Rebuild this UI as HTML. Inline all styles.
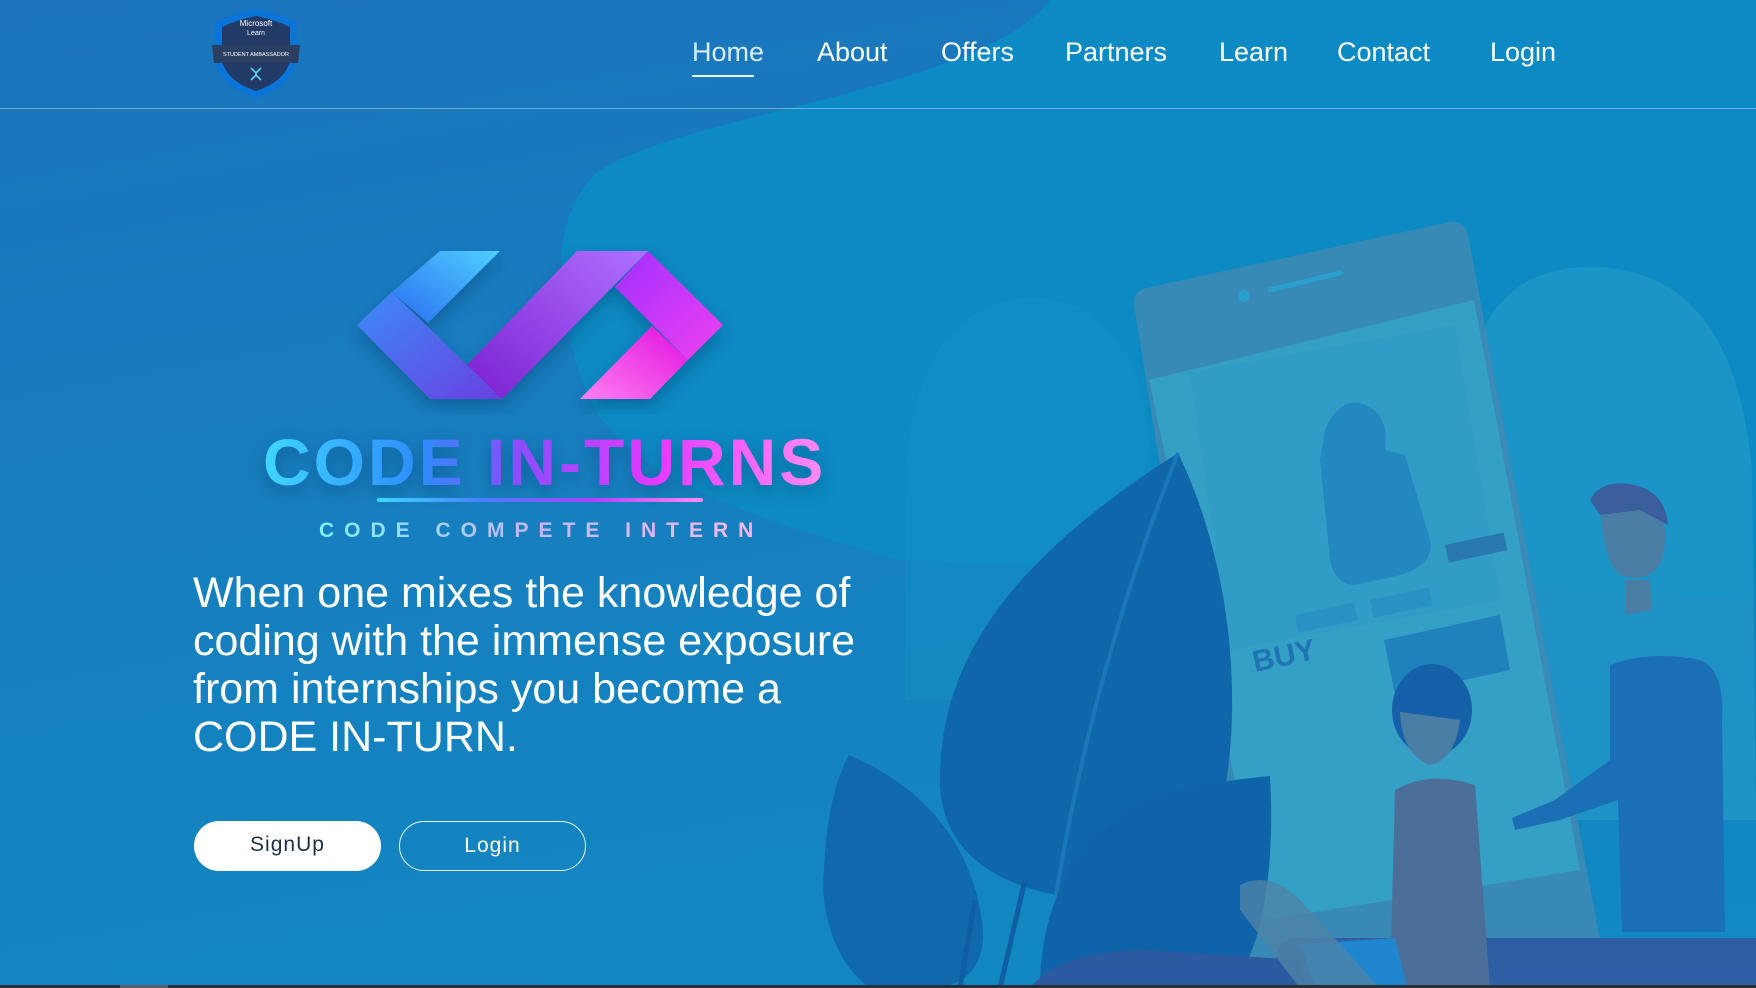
<!DOCTYPE html>
<html><head><meta charset="utf-8">
<style>
*{margin:0;padding:0;box-sizing:border-box}
html,body{width:1756px;height:988px;overflow:hidden}
body{position:relative;font-family:"Liberation Sans",sans-serif;background:linear-gradient(170deg,#1b74bc 0%,#1680bf 50%,#118ac3 100%);color:#fff}
.abs{position:absolute}
.nav a{position:absolute;top:37px;font-size:27px;color:#fff;text-decoration:none;white-space:nowrap}
.hline{position:absolute;left:0;top:108px;width:1756px;height:1px;background:rgba(190,220,245,.5)}
.title{position:absolute;left:263px;top:424px;font-size:66px;font-weight:bold;letter-spacing:3px;white-space:nowrap;background:linear-gradient(90deg,#3fd6ff 0%,#2d8cff 28%,#8a4dff 45%,#e638ff 70%,#ff8cf0 100%);-webkit-background-clip:text;background-clip:text;color:transparent;filter:drop-shadow(0 6px 8px rgba(0,40,90,.35))}
.gline{position:absolute;left:377px;top:498px;width:326px;height:4px;background:linear-gradient(90deg,#3fd6ff,#4a7dff,#b040ff,#ff8cf0);border-radius:2px}
.tag{position:absolute;left:319px;top:519px;font-size:21px;font-weight:bold;letter-spacing:10px;white-space:nowrap;background:linear-gradient(90deg,#7ff0ff,#c7b6ff 50%,#ffb8f2);-webkit-background-clip:text;background-clip:text;color:transparent}
.para{position:absolute;left:193px;top:569px;font-size:43px;line-height:48px;white-space:nowrap}
.btn{position:absolute;top:821px;width:187px;height:50px;border-radius:25px;font-size:21px;letter-spacing:1px;text-align:center;line-height:48px}
</style></head><body>
<svg class="abs" style="left:0;top:0" width="1756" height="988" viewBox="0 0 1756 988">
  <path d="M1050 0 C980 90 700 110 600 170 C540 220 560 330 590 400 C630 480 760 520 900 560 L1756 600 L1756 0 Z" fill="#0c8ac3"/>
  <!-- background domes -->
  <path d="M905 500 C905 360 960 298 1030 298 C1110 298 1150 360 1150 470 L1150 700 L905 700 Z" fill="#1590c6" opacity="0.45"/>
  <path d="M1470 400 C1470 320 1510 267 1590 267 C1690 267 1740 340 1752 470 L1756 820 L1470 820 Z" fill="#2aa0cc" opacity="0.5"/>
  <!-- phone -->
  <path d="M1134 305 Q1133 292 1146 288 L1450 222 Q1465 220 1468 235 L1600 940 L1240 960 Z" fill="#3f8ab4" opacity="0.85"/>
  <path d="M1149 380 L1474 300 L1580 870 L1265 920 Z" fill="#35a0c6"/>
  <path d="M1190 372 L1455 325 L1500 600 L1230 650 Z" fill="#2e9cc4" opacity="0.8"/>
  <path d="M1325 430 Q1340 395 1365 405 Q1390 415 1385 450 L1405 455 L1430 540 Q1435 565 1400 575 L1355 585 Q1335 585 1330 560 L1320 460 Z" fill="#2388c0"/>
  <rect x="1295" y="615" width="60" height="18" fill="#2a92c2" transform="rotate(-12 1295 615)"/>
  <rect x="1370" y="600" width="60" height="18" fill="#2a92c2" transform="rotate(-12 1370 600)"/>
  <rect x="1445" y="545" width="60" height="18" fill="#2a78b0" transform="rotate(-12 1445 545)"/>
  <path d="M1384 640 L1500 615 L1510 670 L1395 695 Z" fill="#1f82bd"/>
  <text x="1255" y="672" font-family="Liberation Sans" font-weight="bold" font-size="30" fill="#1f74b4" transform="rotate(-12 1255 672)">BUY</text>
  <circle cx="1244" cy="296" r="6" fill="#2a9fce"/>
  <path d="M1270 290 L1340 273" stroke="#2a9fce" stroke-width="5" stroke-linecap="round"/>
  <!-- leaves -->
  <path d="M1178 453 C1230 560 1245 700 1221 810 C1190 880 1110 900 1056 895 C980 880 940 840 940 780 C940 660 1010 560 1178 453 Z" fill="#0f66aa"/>
  <path d="M1178 453 C1120 600 1080 750 1056 895" stroke="#1a78b8" stroke-width="4" fill="none"/>
  <path d="M849 755 C930 790 975 850 983 930 C985 970 960 988 930 988 L870 988 C830 960 820 900 824 871 C826 820 835 780 849 755 Z" fill="#1068ad"/>
  <path d="M1270 776 C1275 860 1265 950 1230 988 L1040 988 C1040 900 1080 830 1150 800 C1190 785 1230 780 1270 776 Z" fill="#0f63a8"/>
  <path d="M1000 988 L1025 880 M960 988 L975 900" stroke="#0f5ea3" stroke-width="5"/>
  <!-- couch -->
  <path d="M1300 938 Q1276 938 1276 960 L1276 988 L1756 988 L1756 938 Z" fill="#2e5fa4"/>
  <path d="M1030 988 Q1060 950 1150 950 L1300 960 L1300 988 Z" fill="#2b5aa0"/>
  <!-- man -->
  <path d="M1610 665 Q1650 650 1700 660 Q1725 670 1722 720 L1725 932 L1622 932 L1618 800 L1560 820 L1515 830 L1512 818 L1555 800 L1610 760 Z" fill="#1b6fb5"/>
  <path d="M1600 500 Q1602 560 1620 575 Q1650 585 1662 560 Q1670 530 1660 515 Z" fill="#4b7ea4"/>
  <path d="M1590 500 Q1600 480 1630 484 Q1665 490 1668 525 L1640 510 L1600 515 Z" fill="#3a5e9e"/>
  <path d="M1625 580 L1650 580 L1652 610 L1625 615 Z" fill="#4b7ea4"/>
  <!-- woman -->
  <ellipse cx="1432" cy="710" rx="40" ry="46" fill="#1560a8"/>
  <path d="M1400 712 Q1402 755 1430 765 Q1455 760 1460 720 Z" fill="#4b7ea4"/>
  <path d="M1395 790 Q1430 770 1475 785 L1490 988 L1390 988 Z" fill="#4b6f98"/>
  <path d="M1300 944 L1395 938 L1410 1000 L1320 1000 Z" fill="#1f86cf"/>
  <path d="M1240 885 Q1270 870 1300 900 L1380 988 L1300 988 L1240 910 Z" fill="#4e83a8" opacity="0.8"/>
  <!-- code logo -->
  <defs>
    <linearGradient id="g1" x1="0" y1="1" x2="1" y2="0"><stop offset="0" stop-color="#2a6cf0"/><stop offset="1" stop-color="#4fd0ff"/></linearGradient>
    <linearGradient id="g2" x1="0" y1="0" x2="1" y2="1"><stop offset="0" stop-color="#3a8cf8"/><stop offset="1" stop-color="#6a40e0"/></linearGradient>
    <linearGradient id="g3" x1="0" y1="1" x2="1" y2="0"><stop offset="0" stop-color="#7a20d0"/><stop offset="1" stop-color="#b070ff"/></linearGradient>
    <linearGradient id="g4" x1="0" y1="0" x2="1" y2="1"><stop offset="0" stop-color="#a030ff"/><stop offset="1" stop-color="#f040f0"/></linearGradient>
    <linearGradient id="g5" x1="0" y1="1" x2="1" y2="0"><stop offset="0" stop-color="#ff80f0"/><stop offset="1" stop-color="#e010e0"/></linearGradient>
    <filter id="sh"><feDropShadow dx="0" dy="8" stdDeviation="8" flood-color="#003060" flood-opacity="0.35"/></filter>
  </defs>
  <g filter="url(#sh)">
    <polygon points="357,325 392,292 502,399 430,399" fill="url(#g2)"/>
    <polygon points="392,292 440,251 500,251 428,323" fill="url(#g1)"/>
    <polygon points="467,365 577,251 648,251 502,399" fill="url(#g3)"/>
    <polygon points="615,287 648,251 723,325 688,360" fill="url(#g4)"/>
    <polygon points="580,399 652,326 688,360 650,399" fill="url(#g5)"/>
  </g>
  <!-- shield -->
  <path d="M256 9 Q280 14 297 22 L297 60 Q293 86 256 98 Q219 86 215 60 L215 22 Q232 14 256 9 Z" fill="#0b74d8"/>
  <path d="M256 16 Q276 20 290 27 L290 60 Q286 81 256 91 Q226 81 222 60 L222 27 Q236 20 256 16 Z" fill="#213a66"/>
  <path d="M212 45 L300 45 L298 63 L214 63 Z" fill="#2b3f62"/>
  <text x="256" y="26" font-size="8" fill="#fff" text-anchor="middle" font-family="Liberation Sans">Microsoft</text>
  <text x="256" y="35" font-size="7" fill="#fff" text-anchor="middle" font-family="Liberation Sans">Learn</text>
  <text x="256" y="56" font-size="5.5" fill="#fff" text-anchor="middle" font-family="Liberation Sans">STUDENT AMBASSADOR</text>
  <path d="M251 68 L256 73 L261 68 M256 73 L256 75 M251 80 L256 75 L261 80" stroke="#5fd3f5" stroke-width="1.6" fill="none"/>
  <rect x="0" y="985" width="1756" height="3" fill="#2a2f36"/>
  <rect x="120" y="985" width="48" height="3" fill="#5a5f66"/>
</svg>
<div class="nav">
  <a style="left:692px;color:#d6ecfb">Home</a>
  <a style="left:817px">About</a>
  <a style="left:941px">Offers</a>
  <a style="left:1065px">Partners</a>
  <a style="left:1219px">Learn</a>
  <a style="left:1337px">Contact</a>
  <a style="left:1490px">Login</a>
</div>
<div class="abs" style="left:692px;top:75px;width:62px;height:2px;background:#e8f4fc"></div>
<div class="hline"></div>
<div class="title">CODE IN-TURNS</div>
<div class="gline"></div>
<div class="tag">CODE COMPETE INTERN</div>
<div class="para">When one mixes the knowledge of<br>coding with the immense exposure<br>from internships you become a<br>CODE IN-TURN.</div>
<div class="btn" style="left:194px;background:#fff;color:#1d2f45">SignUp</div>
<div class="btn" style="left:399px;border:1px solid #e6f2fb;color:#fff">Login</div>
</body></html>
